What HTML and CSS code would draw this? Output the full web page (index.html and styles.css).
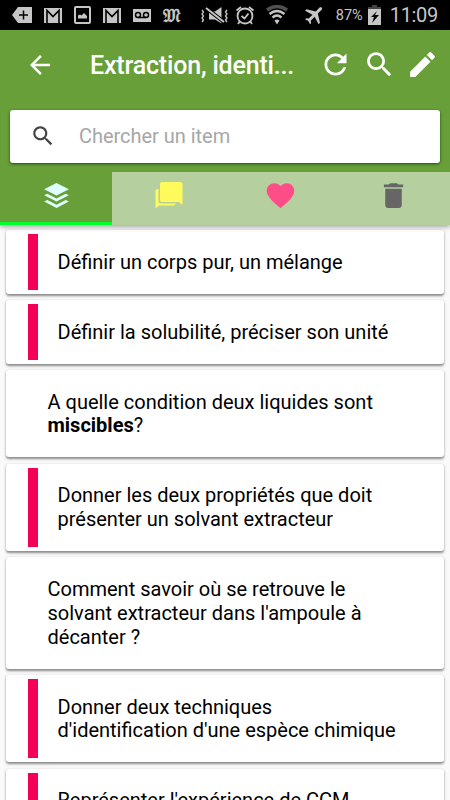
FILE: index.html
```
<!DOCTYPE html>
<html lang="fr">
<head>
    <meta charset="UTF-8">
    <meta name="viewport" content="width=device-width, initial-scale=1.0">
    <title>Extraction, identification</title>
    <link rel="stylesheet" href="styles.css">
</head>
<body>
    <div class="status-bar">
        <div class="status-left">
            <svg width="20" height="16" viewBox="0 0 20 16"><path d="M6 0h14v16H6L0 8z" fill="#c6c6c6"/><path d="M11.500 3.500v9M7 8h9" stroke="#000" stroke-width="1.500"/></svg>
            <svg width="18" height="15" viewBox="0 0 18 15"><path d="M0 0h18v15H0z" fill="#c6c6c6"/><path d="M3 15V2.500l6 6 6-6V15" fill="none" stroke="#000" stroke-width="1.600"/></svg>
            <svg width="17" height="18" viewBox="0 0 17 18"><rect x="1" y="1" width="15" height="16" rx="1" fill="none" stroke="#c6c6c6" stroke-width="2"/><path d="M4 12.500V9.500l2-1 1.500 1L10 7l3 3v2.500z" fill="#c6c6c6"/></svg>
            <svg width="18" height="15" viewBox="0 0 18 15"><path d="M0 0h18v15H0z" fill="#c6c6c6"/><path d="M3 15V2.500l6 6 6-6V15" fill="none" stroke="#000" stroke-width="1.600"/></svg>
            <svg width="18" height="13" viewBox="0 0 18 13"><path d="M0 0h18v13H0z" fill="#c6c6c6"/><g fill="none" stroke="#000" stroke-width="1.500"><circle cx="5" cy="6" r="2.500"/><circle cx="13" cy="6" r="2.500"/><path d="M5 8.500h8"/></g></svg>
            <span class="gothic">𝔐</span>
        </div>
        <div class="status-right">
            <svg class="mute" width="29" height="20" viewBox="0 0 29 20"><path d="M2 5l1.500 2L2 9l1.500 2L2 13l1.500 2L2 17M27 5l-1.500 2L27 9l-1.500 2 1.500 2-1.500 2 1.500 2" fill="none" stroke="#c6c6c6" stroke-width="1.300"/><path d="M9 6.500h6L21.500 2v16.500L15 14.500H9z" fill="#c6c6c6"/><path d="M6 3l18 14" stroke="#000" stroke-width="4"/><path d="M6 3l18 14" stroke="#c6c6c6" stroke-width="2"/></svg>
            <svg class="alarm" width="20" height="20" viewBox="0 0 20 20"><g fill="none" stroke="#c6c6c6" stroke-width="1.800"><circle cx="10" cy="11" r="7.500"/><path d="M6.500 11l3 2.500 4-5M1.500 5.500L6 2M18.500 5.500L14 2M5 16l-2 3M15 16l2 3"/></g></svg>
            <svg class="wifi" width="24" height="20" viewBox="0 0 24 20"><g fill="none"><path d="M2 5q10-7 20 0" stroke="#505050" stroke-width="3.500"/><path d="M4.500 9q7.500-6 15 0M7.500 12.500q4.500-4 9 0" stroke="#c6c6c6" stroke-width="2.400"/></g><path d="M9.500 15.500q2.500-2 5 0L12 19.500z" fill="#c6c6c6"/></svg>
            <svg class="plane" width="24" height="24" viewBox="0 0 24 24"><path transform="rotate(45 12 12)" d="M21 16v-2l-8-5V3.500c0-.83-.67-1.500-1.500-1.500S10 2.670 10 3.500V9l-8 5v2l8-2.500V19l-2 1.500V22l3.500-1 3.500 1v-1.500L13 19v-5.500z" fill="#c6c6c6"/></svg>
            <span class="percent">87%</span>
            <svg class="battery" width="13" height="20" viewBox="0 0 13 20"><path d="M4 0h5v2h4v3H0V2h4z" fill="#444"/><path d="M0 4h13v16H0z" fill="#c6c6c6"/><path d="M9 6l-6 6h3l-2 6 7-8H7z" fill="#000"/></svg>
            <span class="clock">11:09</span>
        </div>
    </div>

    <header class="header">
        <div class="toolbar">
            <svg class="back" viewBox="0 0 24 24"><path d="M20 11H7.830l5.590-5.590L12 4l-8 8 8 8 1.410-1.410L7.830 13H20v-2z"/></svg>
            <h1>Extraction, identi...</h1>
            <div class="actions">
                <svg viewBox="0 0 24 24"><path d="M17.650 6.350C16.200 4.900 14.210 4 12 4c-4.420 0-7.990 3.580-7.990 8s3.570 8 7.990 8c3.730 0 6.840-2.550 7.730-6h-2.080c-.82 2.330-3.040 4-5.650 4-3.310 0-6-2.690-6-6s2.690-6 6-6c1.660 0 3.140.69 4.220 1.780L13 11h7V4l-2.350 2.350z"/></svg>
                <svg viewBox="0 0 24 24"><path d="M15.500 14h-.79l-.28-.27C15.410 12.590 16 11.110 16 9.500 16 5.910 13.090 3 9.500 3S3 5.910 3 9.500 5.910 16 9.500 16c1.610 0 3.090-.59 4.230-1.570l.27.28v.79l5 4.990L20.490 19l-4.990-5zm-6 0C7.010 14 5 11.990 5 9.500S7.010 5 9.500 5 14 7.010 14 9.500 11.990 14 9.500 14z"/></svg>
                <svg viewBox="0 0 24 24"><path d="M3 17.250V21h3.750L17.810 9.940l-3.750-3.750L3 17.250zM20.710 7.040c.39-.39.39-1.020 0-1.410l-2.340-2.340c-.39-.39-1.020-.39-1.410 0l-1.830 1.830 3.750 3.750 1.830-1.830z"/></svg>
            </div>
        </div>
        <div class="search">
            <svg viewBox="0 0 24 24"><path d="M15.500 14h-.79l-.28-.27C15.410 12.590 16 11.110 16 9.500 16 5.910 13.090 3 9.500 3S3 5.910 3 9.500 5.910 16 9.500 16c1.610 0 3.090-.59 4.230-1.570l.27.28v.79l5 4.990L20.490 19l-4.990-5zm-6 0C7.010 14 5 11.990 5 9.500S7.010 5 9.500 5 14 7.010 14 9.500 11.990 14 9.500 14z"/></svg>
            <input type="text" placeholder="Chercher un item">
        </div>
        <nav class="tabs">
            <div class="tab active">
                <svg viewBox="0 0 33 33"><path d="M16.500 4l12.300 6.200-12.300 6.200-12.300-6.200zM4.200 16.300l3-1.500 9.300 4.600 9.300-4.600 3 1.500-12.300 6.200zM4.200 22.600l3-1.500 9.300 4.600 9.300-4.600 3 1.500L16.500 29z"/></svg>
            </div>
            <div class="tab chat">
                <svg viewBox="0 0 33 33"><path d="M10 3h18.500a2 2 0 0 1 2 2v21l-3.500-3H10a2 2 0 0 1-2-2V5a2 2 0 0 1 2-2zM6.500 10v12q0 2.500 2.500 2.500h14.500q0 2-2 2H7l-3.500 3V12q0-2 3-2z"/></svg>
            </div>
            <div class="tab heart">
                <svg viewBox="0 0 24 24"><path d="M12 21.350l-1.450-1.320C5.400 15.360 2 12.280 2 8.500 2 5.420 4.420 3 7.500 3c1.740 0 3.410.81 4.500 2.090C13.090 3.810 14.760 3 16.500 3 19.580 3 22 5.420 22 8.500c0 3.780-3.400 6.860-8.550 11.540L12 21.350z"/></svg>
            </div>
            <div class="tab trash">
                <svg viewBox="0 0 24 24"><path d="M6 19c0 1.100.9 2 2 2h8c1.100 0 2-.9 2-2V7H6v12zM19 4h-3.500l-1-1h-5l-1 1H5v2h14V4z"/></svg>
            </div>
        </nav>
    </header>

    <main class="list">
        <div class="card marked"><p>Définir un corps pur, un mélange</p></div>
        <div class="card marked"><p>Définir la solubilité, préciser son unité</p></div>
        <div class="card"><p>A quelle condition deux liquides sont<br><b>miscibles</b>?</p></div>
        <div class="card marked"><p>Donner les deux propriétés que doit<br>présenter un solvant extracteur</p></div>
        <div class="card"><p>Comment savoir où se retrouve le<br>solvant extracteur dans l'ampoule à<br>décanter ?</p></div>
        <div class="card marked"><p>Donner deux techniques<br>d'identification d'une espèce chimique</p></div>
        <div class="card marked"><p>Représenter l'expérience de CCM</p></div>
    </main>
</body>
</html>
```

FILE: styles.css
```
* {
    box-sizing: border-box;
}

body {
    margin: 0;
    height: 800px;
    overflow: hidden;
    font-family: Roboto, sans-serif;
    background: #fafafa;
    color: #000;
    display: flex;
    flex-direction: column;
}

svg {
    display: block;
    flex: none;
}

.status-bar {
    height: 30px;
    flex: none;
    background: #000;
    color: #c6c6c6;
    display: flex;
    justify-content: space-between;
    align-items: center;
    padding: 0 12px;
}

.status-left,
.status-right {
    display: flex;
    align-items: center;
}

.status-left {
    gap: 12px;
}

.gothic {
    font-family: "DejaVu Sans", "DejaVu Serif", serif;
    font-size: 19px;
    font-weight: bold;
    line-height: 20px;
}

.alarm {
    margin-left: 6px;
}

.wifi {
    margin-left: 10px;
}

.plane {
    margin-left: 14px;
}

.percent {
    font-size: 14.5px;
    margin-left: 9px;
}

.battery {
    margin-left: 5px;
}

.clock {
    font-size: 20px;
    letter-spacing: -0.3px;
    margin-left: 9px;
}

.header {
    flex: none;
    height: 195px;
    background: #689f38;
    box-shadow: 0 2px 5px rgba(0, 0, 0, 0.35);
    position: relative;
    z-index: 1;
    display: flex;
    flex-direction: column;
}

.toolbar {
    height: 70px;
    display: flex;
    align-items: center;
    padding: 0 11px 0 25px;
    color: #fff;
    fill: #fff;
}

.back {
    width: 30px;
    height: 30px;
}

h1 {
    margin: 0 0 0 35px;
    font-size: 25px;
    font-weight: 500;
    letter-spacing: -0.18px;
    white-space: nowrap;
}

.actions {
    display: flex;
    gap: 10.5px;
    margin-left: auto;
    padding-bottom: 1px;
}

.actions svg {
    width: 33px;
    height: 33px;
}

.search {
    height: 53px;
    margin: 10px 10px 9px;
    padding: 0 0 2px 20px;
    background: #fff;
    border-radius: 3px;
    box-shadow: 0 1px 3px rgba(0, 60, 0, 0.8);
    display: flex;
    align-items: center;
}

.search svg {
    width: 26px;
    height: 26px;
    fill: #444;
}

.search input {
    border: none;
    outline: none;
    padding: 0;
    margin-left: 23px;
    font-family: inherit;
    font-size: 20px;
    letter-spacing: -0.03px;
    background: none;
}

.search input::placeholder {
    color: #a6a6a6;
}

.tabs {
    display: grid;
    grid-template-columns: 112px repeat(3, 1fr);
    height: 53px;
}

.tab {
    background: #b5d09e;
    display: flex;
    justify-content: center;
    padding-top: 7px;
}

.tab svg {
    width: 33px;
    height: 33px;
}

.active {
    background: none;
    border-bottom: 3px solid #00ff30;
    fill: #e0ffff;
}

.chat {
    fill: #fffb5c;
}

.heart {
    fill: #ff4d88;
}

.trash {
    fill: #666;
}

.list {
    padding: 5px 6px 0;
    display: flex;
    flex-direction: column;
    gap: 6.250px;
}

.card {
    flex: none;
    background: #fff;
    border-radius: 3px;
    box-shadow: 0 1.5px 2.500px rgba(0, 0, 0, 0.45);
    padding: 20.600px 0 19.400px 41.500px;
}

.card p {
    margin: 0;
    font-size: 20px;
    line-height: 23.750px;
    white-space: nowrap;
}

.marked {
    padding: 4px 21.500px;
}

.marked p {
    border-left: 10px solid #f50057;
    padding: 16.600px 0 15.400px 20px;
}
```
